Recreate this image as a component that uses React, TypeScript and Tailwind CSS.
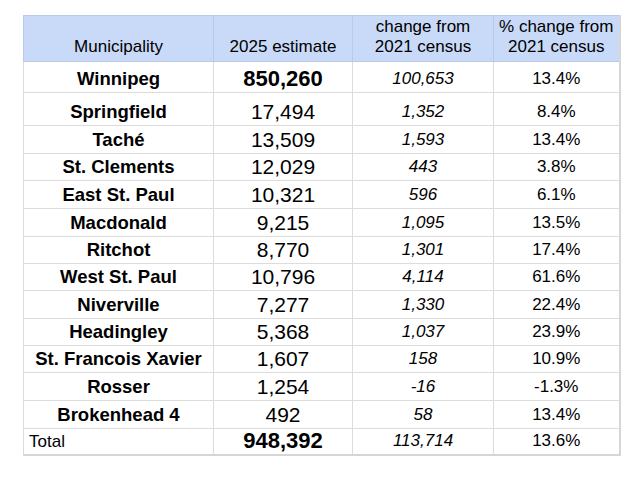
const rows = [
  { name: "Winnipeg", est: "850,260", change: "100,653", pct: "13.4%", h: "h-[31px]", big: true },
  { name: "Springfield", est: "17,494", change: "1,352", pct: "8.4%", h: "h-[33px]" },
  { name: "Taché", est: "13,509", change: "1,593", pct: "13.4%", h: "h-[28px]" },
  { name: "St. Clements", est: "12,029", change: "443", pct: "3.8%", h: "h-[27px]" },
  { name: "East St. Paul", est: "10,321", change: "596", pct: "6.1%", h: "h-[28px]" },
  { name: "Macdonald", est: "9,215", change: "1,095", pct: "13.5%", h: "h-[28px]" },
  { name: "Ritchot", est: "8,770", change: "1,301", pct: "17.4%", h: "h-[27px]" },
  { name: "West St. Paul", est: "10,796", change: "4,114", pct: "61.6%", h: "h-[27px]" },
  { name: "Niverville", est: "7,277", change: "1,330", pct: "22.4%", h: "h-[28px]" },
  { name: "Headingley", est: "5,368", change: "1,037", pct: "23.9%", h: "h-[27px]" },
  { name: "St. Francois Xavier", est: "1,607", change: "158", pct: "10.9%", h: "h-[27px]" },
  { name: "Rosser", est: "1,254", change: "-16", pct: "-1.3%", h: "h-[28px]" },
  { name: "Brokenhead 4", est: "492", change: "58", pct: "13.4%", h: "h-[28px]" },
];

const cell = "border border-[#dcdcdc] align-bottom text-center pb-[3px] pt-0 px-1";

export default function App() {
  return (
    <div className="w-[640px] h-[483px] bg-white pt-[15px] pl-[23px] font-['Liberation_Sans',Arial,sans-serif] text-black">
      <table className="table-fixed border-collapse w-[596px] border-r-2 border-b-2 border-[#d6d6d6]">
        <colgroup>
          <col className="w-[190px]" />
          <col className="w-[139px]" />
          <col className="w-[141px]" />
          <col className="w-[126px]" />
        </colgroup>
        <thead>
          <tr className="h-[46px] bg-[#c9daf8] text-[17px] leading-[20px]">
            <th className="border border-[#b9c9e6] align-bottom font-normal pb-[4px]">Municipality</th>
            <th className="border border-[#b9c9e6] align-bottom font-normal pb-[4px]">2025 estimate</th>
            <th className="border border-[#b9c9e6] align-bottom font-normal pb-[4px]">
              change from
              <br />
              2021 census
            </th>
            <th className="border border-[#b9c9e6] align-bottom font-normal pb-[4px]">
              % change from
              <br />
              2021 census
            </th>
          </tr>
        </thead>
        <tbody>
          {rows.map((r) => (
            <tr key={r.name} className={r.h}>
              <td className={`${cell} text-[18.5px] font-bold leading-[20px]`}>{r.name}</td>
              <td
                className={`${cell} leading-[20px] ${
                  r.big ? "text-[22px] font-bold" : "text-[21px]"
                }`}
              >
                {r.est}
              </td>
              <td className={`${cell} text-[17px] italic leading-[20px]`}>{r.change}</td>
              <td className={`${cell} text-[17px] leading-[20px]`}>{r.pct}</td>
            </tr>
          ))}
          <tr className="h-[26px]">
            <td className="border border-[#dcdcdc] align-bottom text-left pl-[5px] pb-[2px] text-[17px] leading-[20px]">
              Total
            </td>
            <td className={`${cell} text-[22px] font-bold leading-[20px]`}>948,392</td>
            <td className={`${cell} text-[17px] italic leading-[20px]`}>113,714</td>
            <td className={`${cell} text-[17px] leading-[20px]`}>13.6%</td>
          </tr>
        </tbody>
      </table>
    </div>
  );
}
